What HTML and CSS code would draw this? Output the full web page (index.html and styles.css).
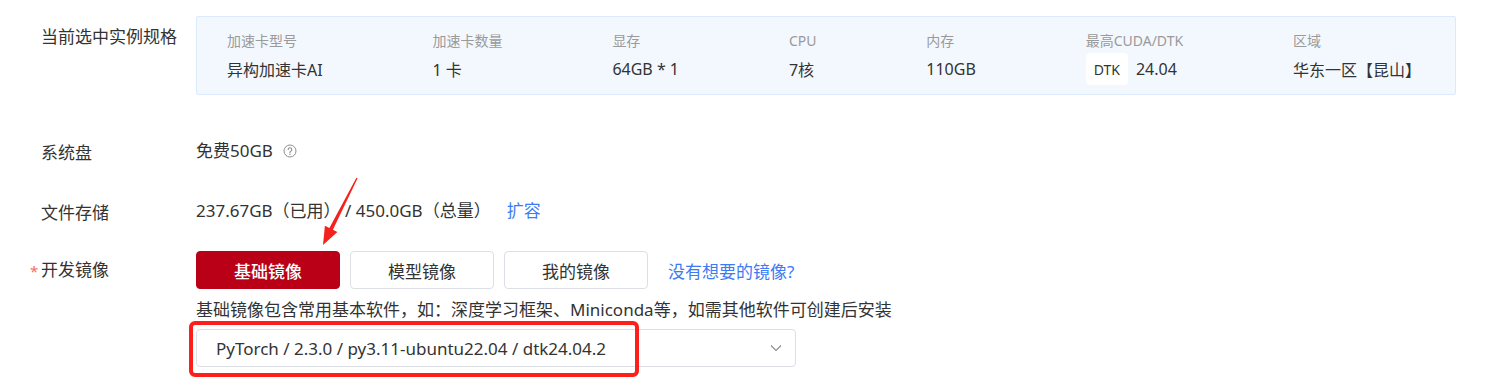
FILE: index.html
```html
<!DOCTYPE html>
<html lang="zh-CN">
<head>
<meta charset="utf-8">
<link rel="stylesheet" href="styles.css">
</head>
<body>
<div class="page">
  <div class="row row-spec">
    <div class="label label-spec">当前选中实例规格</div>
    <div class="spec-box">
      <div class="spec-col"><div class="spec-k">加速卡型号</div><div class="spec-v">异构加速卡AI</div></div>
      <div class="spec-col"><div class="spec-k">加速卡数量</div><div class="spec-v">1 卡</div></div>
      <div class="spec-col"><div class="spec-k">显存</div><div class="spec-v">64GB * 1</div></div>
      <div class="spec-col"><div class="spec-k">CPU</div><div class="spec-v">7核</div></div>
      <div class="spec-col"><div class="spec-k">内存</div><div class="spec-v">110GB</div></div>
      <div class="spec-col"><div class="spec-k">最高CUDA/DTK</div><div class="spec-v"><span class="badge">DTK</span><span>24.04</span></div></div>
      <div class="spec-col"><div class="spec-k">区域</div><div class="spec-v">华东一区【昆山】</div></div>
    </div>
  </div>

  <div class="row row-line row-disk">
    <div class="label">系统盘</div>
    <div class="value"><span>免费50GB</span><svg class="help" width="14" height="14" viewBox="0 0 14 14"><circle cx="7" cy="7" r="6" fill="none" stroke="#8f8f8f" stroke-width="1"/><path d="M5.2 5.6a1.8 1.8 0 1 1 2.6 1.6c-.6.3-.8.6-.8 1.2v.4" fill="none" stroke="#8f8f8f" stroke-width="1.1" stroke-linecap="round"/><circle cx="7" cy="10.2" r="0.7" fill="#8f8f8f"/></svg></div>
  </div>

  <div class="row row-line row-file">
    <div class="label">文件存储</div>
    <div class="value"><span>237.67GB（已用） / 450.0GB（总量）</span><a class="link expand">扩容</a></div>
  </div>

  <div class="row row-image">
    <div class="label label-req"><span class="star">*</span>开发镜像</div>
    <div class="image-body">
      <div class="btns">
        <button class="btn btn-active">基础镜像</button>
        <button class="btn">模型镜像</button>
        <button class="btn">我的镜像</button>
        <a class="link want">没有想要的镜像?</a>
      </div>
      <div class="tip">基础镜像包含常用基本软件，如：深度学习框架、Miniconda等，如需其他软件可创建后安装</div>
      <div class="select-wrap">
        <div class="select">
          <span>PyTorch / 2.3.0 / py3.11-ubuntu22.04 / dtk24.04.2</span>
          <svg width="12" height="8" viewBox="0 0 12 8"><path d="M1 1.5l5 5 5-5" fill="none" stroke="#8c8c8c" stroke-width="1.1"/></svg>
        </div>
        <div class="mark"></div>
      </div>
    </div>
  </div>

  <svg class="arrow" width="50" height="75" viewBox="0 0 50 75"><polygon points="8,70 9.9,50.8 14.4,53 41.4,2.7 42.6,3.3 17.9,54.8 22.4,57.1" fill="#f5211d"/></svg>
</div>
</body>
</html>
```

FILE: styles.css
```css
* { box-sizing: border-box; }
html, body { margin: 0; padding: 0; background: #fff; }
body {
  font-family: "Noto Sans", "Noto Sans CJK SC", sans-serif;
  color: #333;
  font-size: 17px;
}
.page {
  position: relative;
  width: 1485px;
  height: 388px;
  padding: 16px 0 0 41px;
}
.row { display: flex; }
.label {
  width: 155px;
  flex: none;
  font-size: 17px;
  color: #333;
}
.row-spec { align-items: flex-start; }
.label-spec { line-height: 24px; margin-top: 9px; }
.spec-box {
  width: 1260px;
  height: 79px;
  background: #f3f8fe;
  border: 1px solid #dcebfb;
  border-radius: 2px;
  display: flex;
  justify-content: space-between;
  padding: 14px 34px 0 30px;
}
.spec-k { font-size: 14px; line-height: 20px; color: #9a9a9a; }
.spec-v {
  margin-top: 2px;
  height: 32px;
  display: flex;
  align-items: center;
  font-size: 16px;
  color: #333;
  white-space: nowrap;
}
.badge {
  background: #fff;
  border-radius: 4px;
  height: 32px;
  padding: 0 8px;
  display: inline-flex;
  align-items: center;
  font-size: 14px;
  margin-right: 8px;
}
.row-line { height: 40px; align-items: center; }
.row-disk { margin-top: 36px; }
.row-file { margin-top: 20px; }
.value { display: flex; align-items: center; white-space: pre; line-height: 24px; }
.help { margin-left: 10px; }
.link { color: #3d7bf4; cursor: pointer; }
.expand { margin-left: 16px; }
.row-image { margin-top: 20px; align-items: flex-start; }
.label-req { line-height: 38px; position: relative; }
.star { position: absolute; left: -11px; top: 1px; color: #f56c6c; font-size: 15px; }
.image-body { display: flex; flex-direction: column; }
.btns { display: flex; align-items: center; gap: 10px; }
.btn {
  width: 144px;
  height: 38px;
  border: 1px solid #dcdfe6;
  border-radius: 4px;
  background: #fff;
  color: #333;
  font-family: inherit;
  font-size: 17px;
  padding: 0;
}
.btn-active {
  background: #b90016;
  border-color: #b90016;
  color: #fff;
  font-weight: 500;
}
.want { margin-left: 10px; }
.tip { margin-top: 10px; line-height: 22px; font-size: 17px; color: #333; }
.select-wrap { position: relative; margin-top: 8px; width: 600px; }
.select {
  height: 38px;
  border: 1px solid #dcdfe6;
  border-radius: 4px;
  display: flex;
  align-items: center;
  justify-content: space-between;
  padding: 0 13px 0 19px;
  font-size: 17px;
  color: #333;
}
.mark {
  position: absolute;
  left: -7px;
  top: -8px;
  width: 450px;
  height: 56px;
  border: 4px solid #fe1f1b;
  border-radius: 6px;
}
.arrow { position: absolute; left: 315px; top: 175px; }
```
